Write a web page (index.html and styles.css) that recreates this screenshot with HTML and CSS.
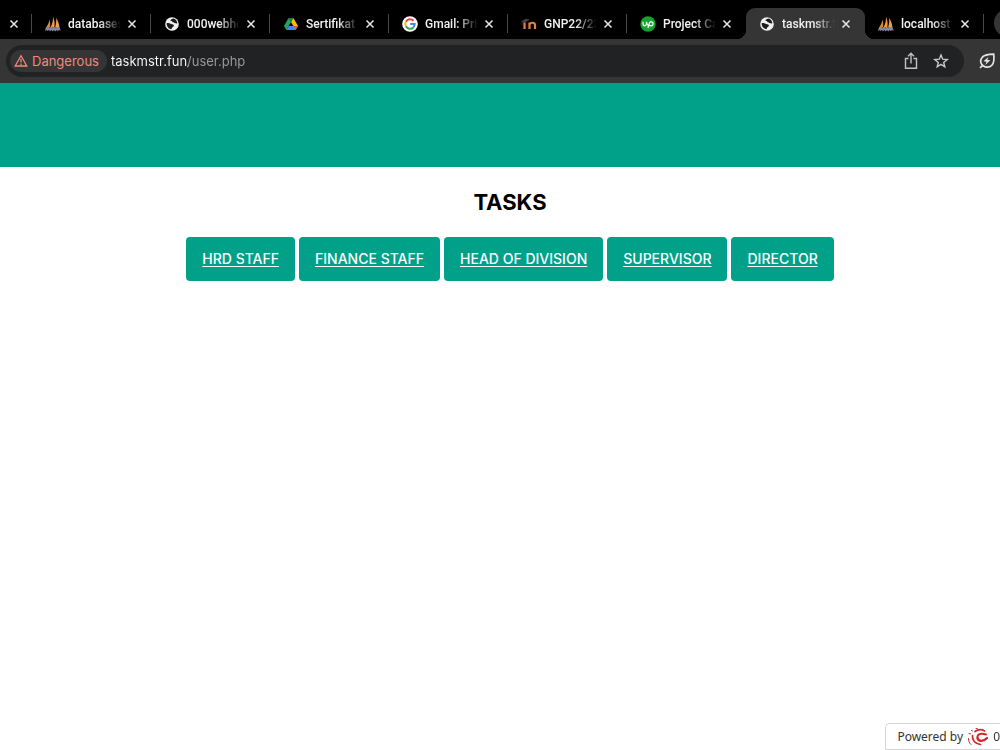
FILE: index.html
```html
<!DOCTYPE html>
<html lang="en">
  <head>
    <meta charset="utf-8" />
    <meta name="viewport" content="width=device-width, initial-scale=1" />
    <title>Tasks</title>
    <link rel="stylesheet" href="styles.css">
  </head>
  <body>
    <!-- shared icons -->
    <svg class="sprite" aria-hidden="true">
      <symbol id="close" viewBox="0 0 10 10">
        <path d="M1.500 1.500l7 7M8.500 1.500l-7 7" fill="none" stroke="#e8e8e8" stroke-width="1.500" />
      </symbol>
      <symbol id="globe" viewBox="0 0 16 16">
        <circle cx="8" cy="8" r="6.800" fill="#f1f1f1" />
        <path d="M2.600 7.200C4 7 5.600 7 6.600 7.700c.8.600 1.600.5 2.500.7 1.200.4 1 1.600.2 2.200-.9.600-1.300 1.500-1.800 2.600-2.700-.2-4.900-2.700-4.900-6z" fill="#1c1c1c" />
        <path d="M9.500 2.600c-1.200.3-3 .9-3 1.900.2.900 1.500.5 1.900 1.200.3.800 1.300 1.200 2.200 1.200 1 .1 1.700.7 2.800.4-.3-2.300-1.800-4.200-3.900-4.700z" fill="#1c1c1c" />
      </symbol>
      <symbol id="sails" viewBox="0 0 16 16">
        <path d="M1 11.500C3 9 4 6.500 4.300 3.500c1 2.500 1.200 5.500.7 8z" fill="#e0813a" />
        <path d="M5.500 11.500C7.500 8 8 4.500 8 .8c1.600 3.500 2 7 1.300 10.700z" fill="#f19a3e" />
        <path d="M10 11.500c1-3 1.400-6 1.200-9.500 2 3 3 6.500 3.300 9.500z" fill="#ef9b52" />
        <path d="M0 15l1-4h3l.6 1.600.8-1.600h1.500l.4 1.500.7-1.500h1.600l.5 1.400.8-1.400h3.500l1.400 3.700-1.900-.7-1 1.300-1.300-1.200-1.200 1.300-1.500-1.400-1 1.400-1.600-1.400-1.300 1.400L4 13.700l-1.200 1.300-1.200-1z" fill="#8587a3" />
      </symbol>
    </svg>

    <div class="tabs">
      <div class="tab tab-cut">
        <button class="tab-close" aria-label="Close tab"><svg><use href="#close" /></svg></button>
      </div>
      <div class="tab">
        <button class="tab-main">
          <svg class="favicon"><use href="#sails" /></svg>
          <span class="tab-title">databases</span>
        </button>
        <button class="tab-close" aria-label="Close tab"><svg><use href="#close" /></svg></button>
      </div>
      <div class="tab">
        <button class="tab-main">
          <svg class="favicon"><use href="#globe" /></svg>
          <span class="tab-title">000webho</span>
        </button>
        <button class="tab-close" aria-label="Close tab"><svg><use href="#close" /></svg></button>
      </div>
      <div class="tab">
        <button class="tab-main">
          <svg class="favicon" viewBox="0 0 16 16">
            <path d="M5.600 2h4.800L8 6z" fill="#188038" />
            <path d="M5.600 2L1 10l2.400 4L8 6z" fill="#23a45a" />
            <path d="M10.400 2L15 10h-4.700L8 6z" fill="#fbbc04" />
            <path d="M5.700 10H15l-2.400 4H3.400z" fill="#4285f4" />
            <path d="M12.600 14L15 10h-4.700z" fill="#ea5a3a" />
          </svg>
          <span class="tab-title">Sertifikat</span>
        </button>
        <button class="tab-close" aria-label="Close tab"><svg><use href="#close" /></svg></button>
      </div>
      <div class="tab">
        <button class="tab-main">
          <svg class="favicon" viewBox="0 0 16 16">
            <circle cx="8" cy="8" r="7.800" fill="#fff" />
            <g fill="none" stroke-width="2">
              <path d="M11.500 4.700A4.700 4.700 0 0 0 3.900 5.700" stroke="#ea4335" />
              <path d="M3.900 5.700a4.700 4.700 0 0 0 0 4.600" stroke="#fbbc05" />
              <path d="M3.900 10.300a4.700 4.700 0 0 0 7.300 1.200" stroke="#34a853" />
              <path d="M11.200 11.500A4.700 4.700 0 0 0 12.700 8H8.200" stroke="#4285f4" />
            </g>
          </svg>
          <span class="tab-title">Gmail: Priv</span>
        </button>
        <button class="tab-close" aria-label="Close tab"><svg><use href="#close" /></svg></button>
      </div>
      <div class="tab">
        <button class="tab-main">
          <svg class="favicon" viewBox="0 0 16 16">
            <path d="M.5 5.500L5 3l3 .8-3.800 2.400zM1 6v3" fill="#4b4440" stroke="#4b4440" stroke-width=".6" />
            <path d="M3.500 13V6.500M8.500 13V6.500M8.500 9c0-3 5.500-3 5.500 0v4" fill="none" stroke="#e8803d" stroke-width="2.200" />
          </svg>
          <span class="tab-title">GNP22/23</span>
        </button>
        <button class="tab-close" aria-label="Close tab"><svg><use href="#close" /></svg></button>
      </div>
      <div class="tab">
        <button class="tab-main">
          <svg class="favicon" viewBox="0 0 16 16">
            <circle cx="8" cy="8" r="7.700" fill="#14a32f" />
            <path d="M3 5.800v2.300a1.700 1.700 0 0 0 3.400 0V5.800c.4 1.600 1.100 2.900 1.900 3.700M7.900 12l1.300-4.600a2 2 0 1 1 2 2.500c-1 0-1.900-.5-2.600-1.300" fill="none" stroke="#fff" stroke-width="1.200" />
          </svg>
          <span class="tab-title">Project Ca</span>
        </button>
        <button class="tab-close" aria-label="Close tab"><svg><use href="#close" /></svg></button>
      </div>
      <div class="tab active">
        <button class="tab-main">
          <svg class="favicon"><use href="#globe" /></svg>
          <span class="tab-title">taskmstr.f</span>
        </button>
        <button class="tab-close" aria-label="Close tab"><svg><use href="#close" /></svg></button>
      </div>
      <div class="tab">
        <button class="tab-main">
          <svg class="favicon"><use href="#sails" /></svg>
          <span class="tab-title">localhost</span>
        </button>
        <button class="tab-close" aria-label="Close tab"><svg><use href="#close" /></svg></button>
      </div>
      <button class="new-tab" aria-label="New tab"></button>
    </div>

    <div class="toolbar">
      <div class="omnibox">
        <button class="danger">
          <svg viewBox="0 0 14 14" width="14" height="14">
            <path d="M7 1.800L12.800 12H1.200z" fill="none" stroke="#ee8a82" stroke-width="1.300" />
            <path d="M7 5v3.600M7 9.400v1.500" stroke="#ee8a82" stroke-width="1.300" />
          </svg>
          Dangerous
        </button>
        <input class="url" type="text" aria-label="Address" value="taskmstr.fun/user.php">
        <button class="icon-btn" aria-label="Share">
          <svg viewBox="0 0 18 18" width="18" height="18">
            <path d="M6.500 6.500h-3v9.700h11V6.500h-3M9 11.500V1.500M6 4.300l3-3 3 3" fill="none" stroke="#c0c2c4" stroke-width="1.400" />
          </svg>
        </button>
        <button class="icon-btn" aria-label="Bookmark">
          <svg viewBox="0 0 18 18" width="18" height="18">
            <path d="M9 3l1.700 4.200 4.500.3-3.500 2.900 1.100 4.400L9 12.400l-3.800 2.400 1.100-4.400-3.500-2.900 4.500-.3z" fill="none" stroke="#c8cacc" stroke-width="1.400" />
          </svg>
        </button>
      </div>
      <button class="icon-btn" aria-label="Energy saver">
        <svg viewBox="0 0 18 18" width="18" height="18">
          <path d="M15.700 2.200c.6 5.300.3 8.700-1.600 10.800-2.200 2.500-6 2.800-8.700 1-3-2-3.600-5.500-1.500-8.200C5.800 3 9.500 2.300 15.700 2.200zM2 16l2.500-2.600" fill="none" stroke="#e4e4e4" stroke-width="1.700" />
          <path d="M10.500 4.700L5.500 9.300l3 .4-1.200 3.200 5-4.700-3-.4z" fill="#e4e4e4" />
        </svg>
      </button>
    </div>

    <header class="header"></header>

    <main class="content">
      <h1>TASKS</h1>
      <nav class="roles">
        <a href="#hrd">HRD STAFF</a>
        <a href="#finance">FINANCE STAFF</a>
        <a href="#head">HEAD OF DIVISION</a>
        <a href="#supervisor">SUPERVISOR</a>
        <a href="#director">DIRECTOR</a>
      </nav>
    </main>

    <a class="powered" href="#host">
      Powered by
      <svg viewBox="0 0 22 20" width="22" height="20">
        <g fill="none" stroke="#d2262c" stroke-linecap="round">
          <path d="M10.500 11C10 7.500 13.500 5.500 19 7.500" stroke-width="2" />
          <path d="M10.500 11c.5 3.500 6 4 9.500 0" stroke-width="2.200" />
          <path d="M5.500 8.500c-.5 4.500 2.500 8.500 8 9" stroke-width="1.700" />
          <path d="M8 4.500c3-2 7-2 9.500-.5" stroke-width="1.700" />
          <path d="M1.500 11.500c0 2.500.8 4.500 2.500 6" stroke-width="1" />
          <path d="M2 6.500l1.500.3M4.500 3.500l1 .5M9 1.500l1.500.2" stroke-width="1" />
        </g>
      </svg>
      <span>0</span>
    </a>
  </body>
</html>
```

FILE: styles.css
```css
* {
  margin: 0;
  padding: 0;
  box-sizing: border-box;
}

body {
  min-height: 100vh;
  font-family: Inter, "Liberation Sans", sans-serif;
  background: #fff;
  color: #000;
  overflow-x: hidden;
}

button {
  border: none;
  background: transparent;
  font: inherit;
  color: inherit;
  cursor: pointer;
}

svg {
  display: block;
  flex-shrink: 0;
}

.sprite {
  display: none;
}

/* tab strip */
.tabs {
  display: flex;
  align-items: flex-end;
  height: 39px;
  background: #000;
  color: #f2f2f2;
  font-family: Roboto, sans-serif;
  font-size: 12px;
  font-weight: 500;
  overflow: hidden;
}

.tab {
  display: flex;
  align-items: center;
  flex: 0 0 119px;
  min-width: 0;
  height: 31px;
  padding: 0 14px 0 13px;
  position: relative;
}

.tab::after {
  content: "";
  position: absolute;
  right: 0;
  top: 6px;
  width: 1px;
  height: 19px;
  background: #4a4a4a;
}

.tab-cut {
  flex-basis: 32px;
  padding: 0 13px 0 9px;
}

.tab-main {
  display: flex;
  align-items: center;
  gap: 7px;
  flex: 1;
  min-width: 0;
  text-align: left;
}

.favicon {
  width: 16px;
  height: 16px;
}

.tab-title {
  flex: 1;
  min-width: 0;
  overflow: hidden;
  white-space: nowrap;
  mask-image: linear-gradient(to right, #000 60%, transparent);
}

.tab-close {
  margin-left: 6px;
  flex-shrink: 0;
}

.tab-cut .tab-close {
  margin-left: 0;
}

.tab-close svg {
  width: 10px;
  height: 10px;
}

.tab.active {
  background: #353535;
  border-radius: 9px 9px 0 0;
}

.tab.active::after,
.tab:has(+ .active)::after {
  display: none;
}

/* curved feet of the active tab */
.tab.active::before {
  content: "";
  position: absolute;
  left: -9px;
  right: -9px;
  bottom: 0;
  height: 9px;
  background:
    radial-gradient(circle at 0 0, transparent 9px, #353535 9px) left / 9px 9px no-repeat,
    radial-gradient(circle at 100% 0, transparent 9px, #353535 9px) right / 9px 9px no-repeat;
}

.new-tab {
  flex: 0 0 28px;
  height: 28px;
  margin: 0 0 2px 10px;
  border-radius: 50%;
  background: #353535;
}

/* toolbar */
.toolbar {
  display: flex;
  align-items: center;
  gap: 14px;
  padding: 6px 4px 6px 6px;
  background: #353535;
  font-size: 13px;
}

.omnibox {
  display: flex;
  align-items: center;
  flex: 1;
  height: 32px;
  padding: 0 14px 0 4px;
  border-radius: 16px;
  background: #202224;
}

.danger {
  display: flex;
  align-items: center;
  gap: 4px;
  height: 22px;
  padding: 0 8px 0 4px;
  border-radius: 11px;
  background: #353535;
  color: #ee8a82;
}

.url {
  flex: 1;
  min-width: 0;
  margin-left: 4px;
  border: none;
  outline: none;
  font: inherit;
  color: transparent;
  caret-color: #fff;
  /* host is bright, path is dimmed */
  background: linear-gradient(to right, #fff 77px, #9a9c9e 77px);
  -webkit-background-clip: text;
  background-clip: text;
}

.icon-btn + .icon-btn {
  margin-left: 12px;
}

/* page */
.header {
  height: 84px;
  background: #00a188;
}

.content {
  padding: 20px 0 20px 20px;
  text-align: center;
}

h1 {
  font-size: 22px;
  line-height: 30px;
  font-weight: 700;
}

.roles {
  display: flex;
  flex-wrap: wrap;
  justify-content: center;
  gap: 4px;
  margin-top: 20px;
}

.roles a {
  padding: 10px 16px;
  border-radius: 4px;
  background: #00a188;
  color: #fff;
  font-size: 14px;
  font-weight: 500;
  line-height: 24px;
  text-underline-offset: 2px;
}

.powered {
  position: fixed;
  right: 0;
  bottom: 0;
  display: flex;
  align-items: center;
  gap: 4px;
  height: 27px;
  padding-left: 11px;
  border: 1px solid #d5d5d5;
  border-right: none;
  border-radius: 5px 0 0 0;
  background: #fff;
  color: #333;
  font-family: "Noto Sans", sans-serif;
  font-size: 12px;
  text-decoration: none;
}
```
